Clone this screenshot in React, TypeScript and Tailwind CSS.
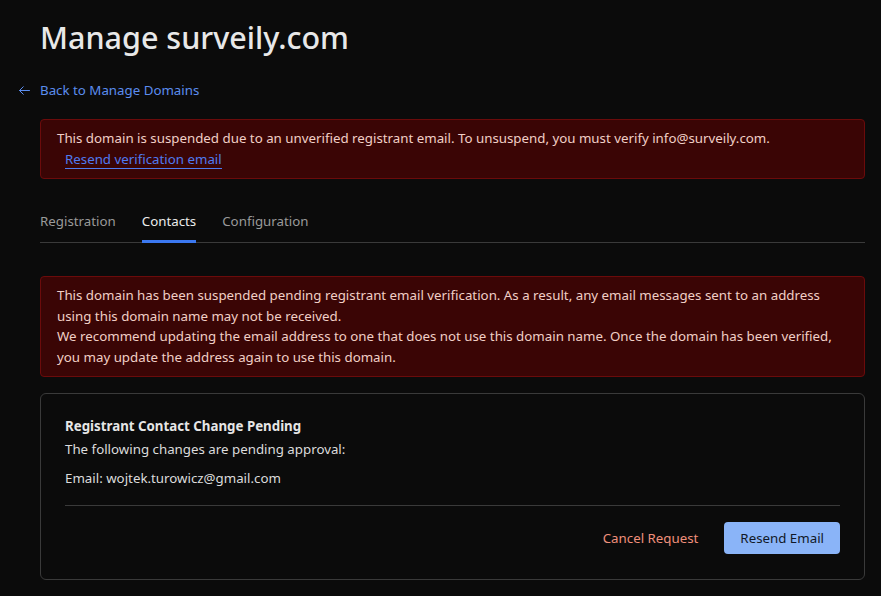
import React from "react";

export default function App() {
  return (
    <div
      className="min-h-[596px] w-full bg-[#0b0b0b] text-[#e3e3e3]"
      style={{ fontFamily: '"Noto Sans", "Open Sans", sans-serif' }}
    >
      <div className="pl-[40px] pr-[16px] pt-[15px]">
        <h1 className="text-[30.5px] leading-[44px] font-medium text-[#e8e8e8]">Manage surveily.com</h1>
        <div className="mt-[21px] -ml-[23px] flex items-center gap-[8px] text-[13.3px] leading-[20px] text-[#5b8def]">
          <svg width="15" height="15" viewBox="0 0 24 24" fill="none" stroke="currentColor" strokeWidth="1.6" strokeLinecap="round" strokeLinejoin="round">
            <path d="M20 12H4" />
            <path d="M10 18l-6-6 6-6" />
          </svg>
          <span>Back to Manage Domains</span>
        </div>

        <div className="mt-[19px] rounded-[4px] border border-[#6b0b0b] bg-[#3a0505] px-[16px] pt-[8px] pb-[8px] text-[13.3px] leading-[21px] text-[#f1cfc6]">
          <div>This domain is suspended due to an unverified registrant email. To unsuspend, you must verify info@surveily.com.</div>
          <a className="ml-[8px] border-b border-[#4f7bf0] text-[#4f7bf0]">Resend verification email</a>
        </div>

        <div className="mt-[32px] flex gap-[26px] border-b border-[#3a3a3a] text-[13.3px] leading-[20px]">
          <div className="pb-[11px] text-[#9a9a9a]">Registration</div>
          <div className="-mb-px border-b-[3px] border-[#3b78f0] pb-[9px] text-[#ececec]">Contacts</div>
          <div className="pb-[11px] text-[#9a9a9a]">Configuration</div>
        </div>

        <div className="mt-[33px] rounded-[4px] border border-[#6b0b0b] bg-[#3a0505] px-[16px] pt-[8px] pb-[9px] text-[13.3px] leading-[20.5px] text-[#f1cfc6]">
          <div>This domain has been suspended pending registrant email verification. As a result, any email messages sent to an address using this domain name may not be received.</div>
          <div>We recommend updating the email address to one that does not use this domain name. Once the domain has been verified, you may update the address again to use this domain.</div>
        </div>

        <div className="mt-[16px] rounded-[6px] border border-[#3a3a3a] px-[24px] pt-[22px] pb-[25px] text-[13.3px] leading-[20px]">
          <div className="font-bold text-[#e6e6e6]">Registrant Contact Change Pending</div>
          <div className="mt-[3px] text-[#dcdcdc]">The following changes are pending approval:</div>
          <div className="mt-[9px] text-[#dcdcdc]">Email: wojtek.turowicz@gmail.com</div>
          <div className="mt-[17px] border-t border-[#3a3a3a]" />
          <div className="mt-[16px] flex items-center justify-end gap-[26px]">
            <button className="text-[13.3px] text-[#f0907c]">Cancel Request</button>
            <button className="h-[32px] rounded-[4px] bg-[#8ab4f8] px-[16px] text-[13.3px] text-[#111827]">Resend Email</button>
          </div>
        </div>
      </div>
    </div>
  );
}
